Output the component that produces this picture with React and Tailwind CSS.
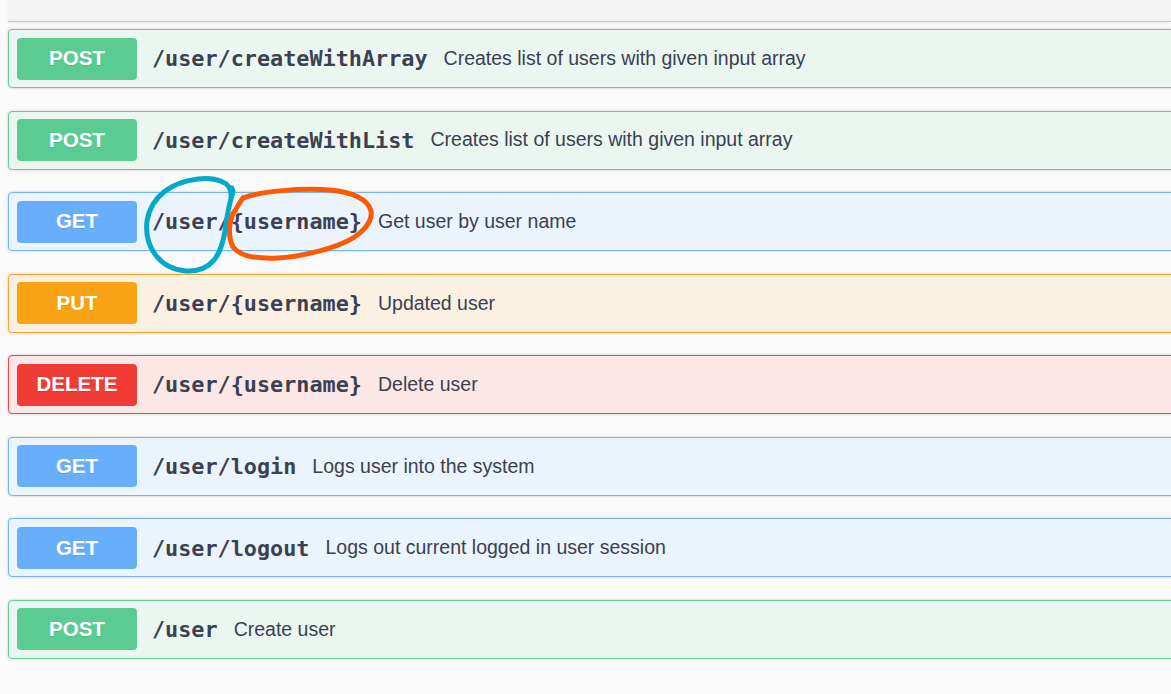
const ops = [
  { method: "POST", path: "/user/createWithArray", desc: "Creates list of users with given input array" },
  { method: "POST", path: "/user/createWithList", desc: "Creates list of users with given input array" },
  { method: "GET", path: "/user/{username}", desc: "Get user by user name", marked: true },
  { method: "PUT", path: "/user/{username}", desc: "Updated user" },
  { method: "DELETE", path: "/user/{username}", desc: "Delete user" },
  { method: "GET", path: "/user/login", desc: "Logs user into the system" },
  { method: "GET", path: "/user/logout", desc: "Logs out current logged in user session" },
  { method: "POST", path: "/user", desc: "Create user" },
];

const styles = {
  POST: { row: "bg-[#ebf6f0] border-[#6acb98]", badge: "bg-[#5bcc91]" },
  GET: { row: "bg-[#ebf3fc] border-[#76b4f5]", badge: "bg-[#67affd]" },
  PUT: { row: "bg-[#fbf1e3] border-[#f8a427]", badge: "bg-[#f8a214]" },
  DELETE: { row: "bg-[#fbe7e6] border-[#ee4946]", badge: "bg-[#f13b37]" },
};

// hand-drawn circles over the GET /user/{username} row
function Marks() {
  return (
    <svg className="absolute left-0 top-0 pointer-events-none" width="400" height="290" viewBox="0 0 400 290">
      <path
        d="M231 197 C233 181 214 177 198 179 C172 182 151 196 147 221 C144 246 159 269 186 271 C212 272 221 255 225 231 C227 215 229 204 233 192 L232 188"
        fill="none"
        stroke="#04a8c8"
        strokeWidth="5"
        strokeLinecap="round"
        strokeLinejoin="round"
      />
      <path
        d="M243 198 C262 191 300 188 330 190 C352 192 368 199 371 211 C373 223 360 236 343 243 C330 249 300 257 278 258 C258 259 240 256 233 247 C227 235 229 218 236 209 C238 205 240 202 243 198"
        fill="none"
        stroke="#fe5a04"
        strokeWidth="5"
        strokeLinecap="round"
        strokeLinejoin="round"
      />
    </svg>
  );
}

function OpRow({ op }) {
  const s = styles[op.method];
  return (
    <div
      className={`flex items-center h-[59px] border rounded-[4px] pl-[8px] mr-[-12px] shadow-[0_0_3px_rgba(0,0,0,0.19)] ${s.row}`}
    >
      <span
        className={`w-[120px] h-[42px] shrink-0 flex items-center justify-center rounded-[4px] text-white font-bold text-[20.5px] [text-shadow:0_1px_0_rgba(0,0,0,0.1)] ${s.badge}`}
        style={{ fontFamily: '"Liberation Sans", Arial, sans-serif' }}
      >
        {op.method}
      </span>
      <span
        className="ml-[15px] pt-[2px] text-[#3b4151] font-bold text-[21.8px] whitespace-nowrap"
        style={{ fontFamily: '"DejaVu Sans Mono", monospace' }}
      >
        {op.path}
      </span>
      <span
        className="ml-[16px] text-[#3b4151] text-[19.5px] whitespace-nowrap"
        style={{ fontFamily: '"Liberation Sans", Arial, sans-serif' }}
      >
        {op.desc}
      </span>
    </div>
  );
}

export default function App() {
  return (
    <div className="relative w-[1171px] h-[694px] overflow-hidden bg-[#fafafa]">
      <div className="ml-[8px] h-[22px] bg-[#f3f3f3] border-b border-[#c4c4c4] shadow-[0_1px_3px_rgba(0,0,0,0.06)]" />
      <div className="flex flex-col gap-[22.57px] pl-[8px] pt-[7px]">
        {ops.map((op, i) => (
          <OpRow key={i} op={op} />
        ))}
      </div>
      <Marks />
    </div>
  );
}
